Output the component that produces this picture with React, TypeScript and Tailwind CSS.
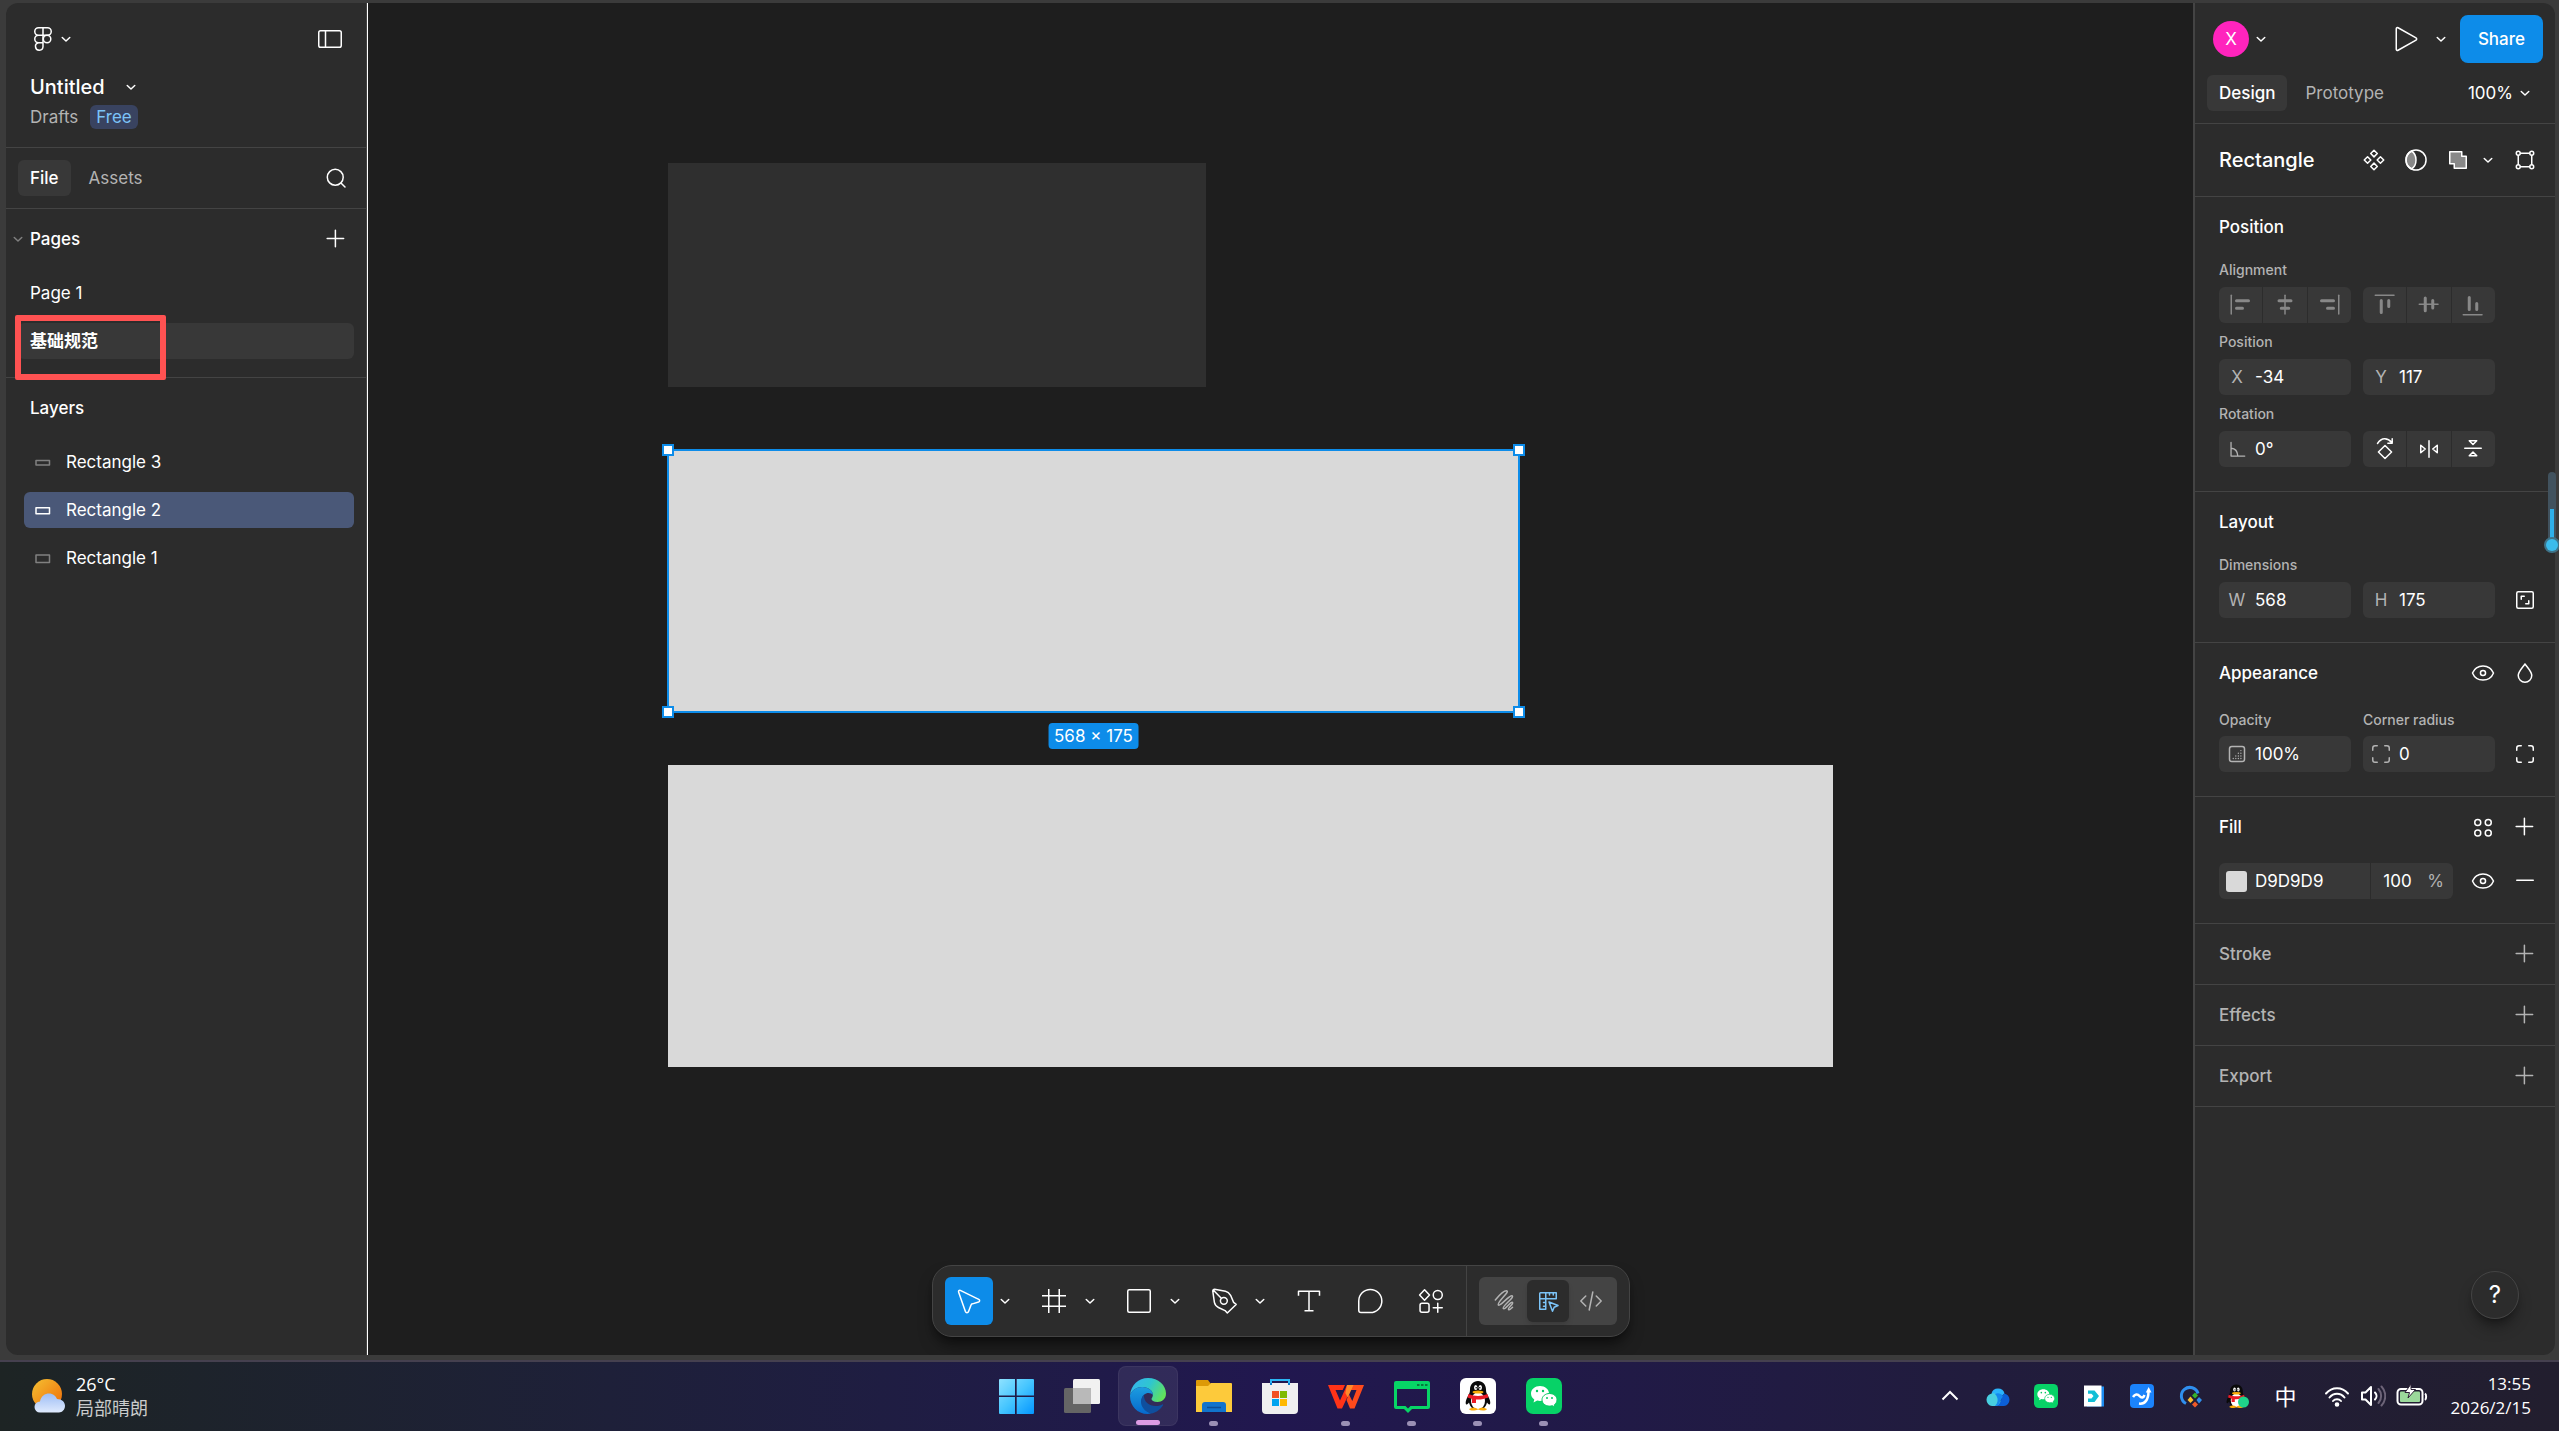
import React from "react";
import clsx from "clsx";

type IconProps = {
  className?: string;
  children: React.ReactNode;
};

// 24 unit grid, drawn at 36px
const Icon = ({ className, children }: IconProps) => (
  <svg
    viewBox="0 0 24 24"
    fill="none"
    stroke="currentColor"
    strokeLinecap="round"
    strokeLinejoin="round"
    aria-hidden="true"
    className={clsx("size-9 shrink-0", className)}>
    {children}
  </svg>
);

const Chevron = ({ className }: { className?: string }) => (
  <svg
    viewBox="0 0 16 16"
    fill="none"
    stroke="currentColor"
    strokeLinecap="round"
    strokeLinejoin="round"
    aria-hidden="true"
    className={clsx("size-6 shrink-0", className)}>
    <path d="M5.500 7 8 9.300 10.500 7" />
  </svg>
);

const PlusIcon = () => (
  <Icon>
    <path d="M11.600 6.100v11M6.100 11.600h11" />
  </Icon>
);

const EyeIcon = () => (
  <Icon>
    <path d="M5 12c1.300-3.200 4-4.700 7-4.700s5.700 1.500 7 4.700c-1.300 3.200-4 4.700-7 4.700S6.300 15.200 5 12z" />
    <circle cx="12" cy="12" r="1.700" />
  </Icon>
);

const CornersIcon = () => (
  <Icon>
    <path d="M6.500 9.500V8A1.500 1.500 0 0 1 8 6.500h1.500M14.500 6.500H16A1.500 1.500 0 0 1 17.500 8v1.500M17.500 14.500V16a1.500 1.500 0 0 1-1.500 1.500h-1.500M9.500 17.500H8A1.500 1.500 0 0 1 6.500 16v-1.500" />
  </Icon>
);

const IconButton = ({
  label,
  className,
  children,
}: IconProps & { label: string }) => (
  <button
    type="button"
    aria-label={label}
    className={clsx("flex items-center justify-center", className)}>
    {children}
  </button>
);

/* ---------- left panel ---------- */

const layers = [
  { name: "Rectangle 3", height: 3, selected: false },
  { name: "Rectangle 2", height: 4, selected: true },
  { name: "Rectangle 1", height: 5, selected: false },
];

const LeftPanel = () => (
  <aside className="w-[361px] shrink-0 rounded-l-xl border-r border-[#444444] bg-[#2c2c2c]">
    <header className="h-[145px] border-b border-[#444444] pt-[18px]">
      <div className="flex items-center pl-[19px] pr-[18px]">
        <IconButton label="Main menu">
          <Icon>
            <path d="M12 4.500H9a2.500 2.500 0 0 0 0 5h3zM12 4.500h3a2.500 2.500 0 0 1 0 5h-3zM12 9.500H9a2.500 2.500 0 0 0 0 5h3zM12 14.500H9a2.500 2.500 0 1 0 3 2.500z" />
            <circle cx="14.700" cy="12" r="2.500" />
          </Icon>
          <Chevron className="-ml-[7px]" />
        </IconButton>
        <IconButton label="Minimize UI" className="ml-auto">
          <Icon>
            <rect x="4.500" y="6.500" width="15" height="11" rx="1.200" />
            <path d="M9 6.500v11" />
          </Icon>
        </IconButton>
      </div>
      <div className="mt-4 flex h-7 items-center pl-6">
        <h1 className="text-[20px] font-[550]">Untitled</h1>
        <IconButton label="File options" className="ml-[14px]">
          <Chevron />
        </IconButton>
      </div>
      <div className="mt-1 flex items-center gap-3 pl-6">
        <a href="#drafts" className="text-[#b3b3b3]">
          Drafts
        </a>
        <span className="flex h-6 items-center rounded-md bg-[#394360] px-[6px] text-[#7cc4f8]">
          Free
        </span>
      </div>
    </header>

    <div className="flex h-[61px] items-center border-b border-[#444444] pl-3 pr-3">
      <button
        type="button"
        className="h-9 rounded-md bg-[#383838] px-3 font-[550]">
        File
      </button>
      <button type="button" className="ml-[6px] h-9 px-3 text-[#b3b3b3]">
        Assets
      </button>
      <IconButton label="Search" className="ml-auto">
        <Icon>
          <circle cx="11.500" cy="11.500" r="5.300" />
          <path d="m15.500 15.500 2.500 2.500" />
        </Icon>
      </IconButton>
    </div>

    <section className="border-b border-[#444444] pb-[18px]">
      <div className="flex h-[60px] items-center pr-3">
        <Chevron className="text-[#808080]" />
        <h2 className="font-[550]">Pages</h2>
        <IconButton label="Add page" className="ml-auto">
          <PlusIcon />
        </IconButton>
      </div>
      <ul className="mt-[6px] flex flex-col gap-3 pl-3 pr-3">
        <li className="flex h-9 items-center pl-3">Page 1</li>
        <li className="relative flex h-9 items-center rounded-md bg-[#383838] pl-3 font-bold">
          基础规范
          <span className="absolute -left-[3px] -top-2 h-[65px] w-[151px] rounded-xs border-6 border-[#ff5252]" />
        </li>
      </ul>
    </section>

    <section>
      <h2 className="flex h-[60px] items-center pl-6 font-[550]">Layers</h2>
      <ul className="mt-[6px] flex flex-col gap-3 pl-[18px] pr-3">
        {layers.map((layer) => (
          <li
            key={layer.name}
            className={clsx(
              "flex h-9 items-center rounded-md",
              layer.selected && "bg-[#4a5878]"
            )}>
            <Icon
              className={layer.selected ? "text-white" : "text-[#808080]"}>
              <rect
                x="8"
                y={12.5 - layer.height / 2}
                width="9"
                height={layer.height}
              />
            </Icon>
            <span className="ml-[6px]">{layer.name}</span>
          </li>
        ))}
      </ul>
    </section>
  </aside>
);

/* ---------- canvas ---------- */

const handles = [
  "-left-[6px] -top-[6px]",
  "-right-[6px] -top-[6px]",
  "-bottom-[6px] -left-[6px]",
  "-bottom-[6px] -right-[6px]",
];

const Canvas = () => (
  <main className="relative flex flex-1 items-end justify-center overflow-hidden border-l border-white bg-[#1e1e1e] pb-[18px]">
    <div className="absolute left-[300px] top-[160px] h-[224px] w-[538px] bg-[#2f2f2f]" />
    <div className="absolute left-[300px] top-[447px] h-[262px] w-[851px] bg-[#d9d9d9] outline-2 -outline-offset-1 outline-[#0d8ce9]">
      {handles.map((position) => (
        <span
          key={position}
          className={clsx(
            "absolute size-3 border-2 border-[#0d8ce9] bg-white",
            position
          )}
        />
      ))}
      <span className="absolute left-1/2 top-[273px] flex h-[26px] -translate-x-1/2 items-center whitespace-nowrap rounded-sm bg-[#0d8ce9] px-[6px]">
        568 × 175
      </span>
    </div>
    <div className="absolute left-[300px] top-[762px] h-[302px] w-[1165px] bg-[#d9d9d9]" />
    <Toolbar />
  </main>
);

const tools = [
  {
    name: "Move",
    active: true,
    menu: true,
    icon: (
      <path d="M5.100 6.100 9.600 19c.4 1 1.700 1 2.100 0l1.600-4.200c.2-.5.500-.8 1-.9l4.100-1.200c.9-.3.900-1.400.1-1.800L6.200 4.900c-.7-.3-1.400.4-1.100 1.200z" />
    ),
  },
  {
    name: "Frame",
    menu: true,
    icon: (
      <path
        d="M8.500 4.500v15M15.500 4.500v15M4.500 8.500h15M4.500 15.500h15"
        strokeLinecap="square"
      />
    ),
  },
  {
    name: "Rectangle",
    menu: true,
    icon: <rect x="4.500" y="4.500" width="15" height="15" rx="1" />,
  },
  {
    name: "Pen",
    menu: true,
    icon: (
      <>
        <path d="M4.500 5.200c.1-.6.500-1 1.200-1L13 5.500c1.500.3 2.600 1.300 3.400 2.700l2 4.700 1.700 1.400-5.900 5.700-1.500-1.600-4.400-2.100c-1.400-.7-2.400-1.900-2.700-3.400zM4.800 4.700l5.400 5.500" />
        <circle cx="11.900" cy="11.900" r="2.300" />
      </>
    ),
  },
  {
    name: "Text",
    icon: (
      <path
        d="M5 8V5.500h14V8M12 5.500v13M9.500 18.500h5"
        strokeLinecap="square"
      />
    ),
  },
  {
    name: "Comment",
    icon: (
      <path d="M4.500 12a7.700 7.700 0 1 1 7.700 7.700H6A1.500 1.500 0 0 1 4.500 18.200z" />
    ),
  },
  {
    name: "Actions",
    icon: (
      <>
        <path d="M7.700 4.500 11 8l-3.300 3.500L4.400 8zM16.500 13.500v6M13.500 16.500h6" />
        <circle cx="16.500" cy="8" r="3" />
        <rect x="4.700" y="13.500" width="6" height="6" rx="1.300" />
      </>
    ),
  },
];

const Toolbar = () => (
  <div className="z-10 flex h-[72px] items-center rounded-[20px] border border-[#444444] bg-[#2c2c2c] shadow-lg shadow-black/50">
    <div className="flex gap-[13px] pl-3 pr-[11px]">
      {tools.map((tool) => (
        <div key={tool.name} className="flex items-center">
          <IconButton
            label={tool.name}
            className={clsx("size-12 rounded-md", tool.active && "bg-[#0d8ce9]")}>
            <Icon>{tool.icon}</Icon>
          </IconButton>
          {tool.menu && (
            <IconButton label={`${tool.name} tools`}>
              <Chevron />
            </IconButton>
          )}
        </div>
      ))}
    </div>
    <div className="h-full border-l border-[#444444] px-3 py-[11px]">
      <div className="flex h-12 items-center rounded-md bg-[#444444] px-[3px] text-[#b3b3b3]">
        <IconButton label="Draw" className="h-[42px] w-[45px]">
          <Icon>
            <path d="M6.200 11.300C9 8 12.500 4.800 14 5.300 15.700 6.100 7 13 8.200 14.600 9.500 16 15.800 7.500 17.500 8.600 19 9.800 10.300 15.700 11.500 17c1.200 1.200 4.800-4.800 6.100-4.100 1.200.9-3.300 3.600-2.600 4.700.6.700 1.800-.6 2.700-1.400" />
          </Icon>
        </IconButton>
        <IconButton
          label="Design"
          className="size-[42px] rounded-md bg-[#2c2c2c] text-[#7cc4f8] shadow-md">
          <Icon>
            <path d="M7 6.500h10.500v4h-7v7h-4v-10.500a.5.500 0 0 1 .5-.5zM10.500 6.500v4h-4M13 6.500v1.500M15.500 6.500v1.500M9 13h1.500M9 15.500h1.500" />
            <path d="m12.700 12.700 6 2.300-2.600 1.200-1.100 2.600z" />
          </Icon>
        </IconButton>
        <IconButton label="Dev Mode" className="h-[42px] w-[45px]">
          <Icon>
            <path d="m8.500 8.700-3.300 3.300 3.300 3.300M15.500 8.700l3.300 3.300-3.300 3.300M13.200 6l-2.400 12" />
          </Icon>
        </IconButton>
      </div>
    </div>
  </div>
);

/* ---------- right panel ---------- */

const alignHorizontal = [
  {
    name: "Align left",
    line: "M5.500 5.500v12.500",
    bars: "M9 9.200h8M9 14.200h4",
  },
  {
    name: "Align horizontal centers",
    line: "M12 5.500v12.500",
    bars: "M8 9.200h8M9.500 14.200h5",
  },
  {
    name: "Align right",
    line: "M18.500 5.500v12.500",
    bars: "M7 9.200h8M11 14.200h4",
  },
];

const alignVertical = [
  { name: "Align top", line: "M5.500 5.500h12.500", bars: "M9.500 9v8M14.500 9v4" },
  {
    name: "Align vertical centers",
    line: "M5.500 11.500h12.500",
    bars: "M9.500 7.300v8.500M14.500 9v5",
  },
  {
    name: "Align bottom",
    line: "M5.500 18.500h12.500",
    bars: "M9.500 7v8M14.500 11v4",
  },
];

const transforms = [
  {
    name: "Rotate 90° right",
    icon: (
      <path d="M7 8.300c2.800-4 6.500-4 9.700-.5M16.800 5.200v2.900h-2.900M12 9.700l4.400 4.300-4.400 4.300L7.600 14z" />
    ),
  },
  {
    name: "Flip horizontal",
    icon: <path d="M12 6.500v11M6.500 9.500v5l3-2.500zM17.500 9.500v5l-3-2.500z" />,
  },
  {
    name: "Flip vertical",
    icon: <path d="M6.500 11.500h11M9.500 6.500h5L12 9zM9.500 16.500h5L12 14z" />,
  },
];

type CellsProps = {
  label: string;
  className?: string;
  items: { name: string; icon: React.ReactNode }[];
};

const Cells = ({ label, className, items }: CellsProps) => (
  <div
    role="group"
    aria-label={label}
    className={clsx("flex gap-px overflow-hidden rounded-md", className)}>
    {items.map((item) => (
      <IconButton
        key={item.name}
        label={item.name}
        className="flex-1 bg-[#383838]">
        <Icon>{item.icon}</Icon>
      </IconButton>
    ))}
  </div>
);

const toAlignCell = (item: (typeof alignHorizontal)[number]) => ({
  name: item.name,
  icon: (
    <>
      <path d={item.line} />
      <path d={item.bars} strokeWidth="2" />
    </>
  ),
});

type FieldProps = {
  name: string;
  value: string;
  children: React.ReactNode;
};

const Field = ({ name, value, children }: FieldProps) => (
  <label className="flex h-9 items-center rounded-md bg-[#383838]">
    <span className="flex w-9 shrink-0 justify-center text-[#b3b3b3]">
      {children}
    </span>
    <input
      aria-label={name}
      defaultValue={value}
      className="w-full min-w-0 outline-none"
    />
  </label>
);

const FieldLabel = ({ children }: { children: React.ReactNode }) => (
  <p className="text-sm font-medium text-[#b3b3b3]">{children}</p>
);

const Row = ({
  className,
  children,
}: {
  className?: string;
  children: React.ReactNode;
}) => (
  <div
    className={clsx(
      "grid grid-cols-[1fr_1fr_36px] items-center gap-x-3",
      className
    )}>
    {children}
  </div>
);

const Section = ({ children }: { children: React.ReactNode }) => (
  <section className="border-b border-[#444444] pb-6 pl-6 pr-3">
    {children}
  </section>
);

const RightPanel = () => (
  <aside className="flex w-[362px] shrink-0 flex-col rounded-r-xl border-l-2 border-[#444444] bg-[#2c2c2c]">
    <header className="border-b border-[#444444] pb-3 pt-3">
      <div className="flex h-12 items-center pl-[18px] pr-3">
        <IconButton label="Account">
          <span className="flex size-9 items-center justify-center rounded-full bg-[#ff24bd]">
            X
          </span>
          <Chevron />
        </IconButton>
        <IconButton label="Present" className="ml-auto">
          <Icon>
            <path d="M5.500 5.200v13.600a.8.800 0 0 0 1.200.7l12-6.800a.8.800 0 0 0 0-1.400l-12-6.800a.8.800 0 0 0-1.200.7z" />
          </Icon>
        </IconButton>
        <IconButton label="Present options" className="ml-[5px]">
          <Chevron />
        </IconButton>
        <button
          type="button"
          className="ml-[7px] h-12 rounded-lg bg-[#0d8ce9] px-[18px] font-medium">
          Share
        </button>
      </div>
      <div className="mt-3 flex h-9 items-center pl-3 pr-[18px]">
        <button
          type="button"
          className="h-9 rounded-md bg-[#383838] px-3 font-[550]">
          Design
        </button>
        <button type="button" className="ml-[6px] h-9 px-3 text-[#b3b3b3]">
          Prototype
        </button>
        <button type="button" className="ml-auto flex items-center">
          100%
          <Chevron />
        </button>
      </div>
    </header>

    <div className="flex h-[73px] items-center border-b border-[#444444] pl-6 pr-3">
      <h1 className="flex-1 text-[20px] font-[550]">Rectangle</h1>
      <IconButton label="Create component">
        <Icon>
          <path d="m12 5.500 2.200 2.200L12 9.900 9.800 7.700zM12 14.100l2.200 2.200-2.200 2.200-2.200-2.200zM7.700 9.800l2.200 2.200-2.200 2.200L5.500 12zM16.300 9.800l2.200 2.200-2.200 2.200-2.200-2.200z" />
        </Icon>
      </IconButton>
      <IconButton label="Use as mask" className="ml-[6px]">
        <Icon>
          <path
            d="M9 6a6.800 6.800 0 0 0 0 12c4-2.500 4-9.500 0-12z"
            fill="#888888"
          />
          <circle cx="12" cy="12" r="6.700" />
        </Icon>
      </IconButton>
      <IconButton label="Union" className="ml-[6px]">
        <Icon>
          <path
            d="M6.500 6.500h8v3h3v8h-8v-3h-3z"
            fill="#888888"
          />
        </Icon>
        <Chevron />
      </IconButton>
      <IconButton label="Edit object" className="ml-[7px]">
        <Icon>
          <path d="M9 7.500h6M9 16.500h6M7.500 9v6M16.500 9v6" />
          <circle cx="7.500" cy="7.500" r="1.300" />
          <circle cx="16.500" cy="7.500" r="1.300" />
          <circle cx="7.500" cy="16.500" r="1.300" />
          <circle cx="16.500" cy="16.500" r="1.300" />
        </Icon>
      </IconButton>
    </div>

    <Section>
      <h2 className="flex h-[54px] items-center pt-[6px] font-[550]">
        Position
      </h2>
      <Row className="auto-rows-[36px]">
        <div className="col-span-3 pt-[2px]">
          <FieldLabel>Alignment</FieldLabel>
        </div>
        <Cells
          label="Horizontal alignment"
          className="text-[#888888]"
          items={alignHorizontal.map(toAlignCell)}
        />
        <Cells
          label="Vertical alignment"
          className="text-[#888888]"
          items={alignVertical.map(toAlignCell)}
        />
        <div className="col-span-3 pt-[2px]">
          <FieldLabel>Position</FieldLabel>
        </div>
        <Field name="X position" value="-34">
          X
        </Field>
        <Field name="Y position" value="117">
          Y
        </Field>
        <div className="col-span-3 pt-[2px]">
          <FieldLabel>Rotation</FieldLabel>
        </div>
        <Field name="Rotation" value="0°">
          <Icon>
            <path d="M7.500 7v10.500H18M7.500 11.500c3 .2 5 2.500 5.200 6" transform="translate(1.500 1.500) scale(.87)" />
          </Icon>
        </Field>
        <Cells label="Transform" items={transforms} />
      </Row>
    </Section>

    <Section>
      <h2 className="flex h-[54px] items-center pt-[6px] font-[550]">
        Layout
      </h2>
      <Row className="auto-rows-[36px]">
        <div className="col-span-3 pt-[2px]">
          <FieldLabel>Dimensions</FieldLabel>
        </div>
        <Field name="Width" value="568">
          W
        </Field>
        <Field name="Height" value="175">
          H
        </Field>
        <IconButton label="Lock aspect ratio">
          <Icon>
            <rect x="6.500" y="6.500" width="11" height="11" rx="1" />
            <path d="M9.500 11.500v-2h2M14.500 12.500v2h-2" />
          </Icon>
        </IconButton>
      </Row>
    </Section>

    <Section>
      <div className="flex h-[60px] items-center gap-[6px]">
        <h2 className="flex-1 font-[550]">Appearance</h2>
        <IconButton label="Hide">
          <EyeIcon />
        </IconButton>
        <IconButton label="Blend mode">
          <Icon>
            <path d="M12 6c-1.500 2.300-4.500 5-4.500 7.700a4.500 4.500 0 0 0 9 0C16.500 11 13.500 8.300 12 6z" />
          </Icon>
        </IconButton>
      </div>
      <Row className="h-[33px]">
        <FieldLabel>Opacity</FieldLabel>
        <FieldLabel>Corner radius</FieldLabel>
      </Row>
      <Row>
        <Field name="Opacity" value="100%">
          <Icon>
            <rect x="7" y="7" width="10" height="10" rx="1.500" />
            <path
              d="M9.500 15h.01M11.200 15h.01M12.900 15h.01M14.600 15h.01M11.200 13.300h.01M12.900 13.300h.01M14.600 13.300h.01M12.900 11.500h.01M14.600 11.500h.01M14.600 9.700h.01"
              strokeWidth=".9"
            />
          </Icon>
        </Field>
        <Field name="Corner radius" value="0">
          <CornersIcon />
        </Field>
        <IconButton label="Individual corners">
          <CornersIcon />
        </IconButton>
      </Row>
    </Section>

    <Section>
      <div className="flex h-[60px] items-center gap-[6px]">
        <h2 className="flex-1 font-[550]">Fill</h2>
        <IconButton label="Styles">
          <Icon>
            <circle cx="8.500" cy="9" r="2" />
            <circle cx="15.500" cy="9" r="2" />
            <circle cx="8.500" cy="16" r="2" />
            <circle cx="15.500" cy="16" r="2" />
          </Icon>
        </IconButton>
        <IconButton label="Add fill">
          <PlusIcon />
        </IconButton>
      </div>
      <div className="mt-[6px] flex items-center">
        <div className="flex h-9 min-w-0 flex-1 items-center rounded-md bg-[#383838]">
          <span className="ml-[7px] size-[21px] shrink-0 rounded-[3px] bg-[#d9d9d9]" />
          <input
            aria-label="Fill color"
            defaultValue="D9D9D9"
            className="ml-2 w-full min-w-0 outline-none"
          />
          <label className="flex h-9 shrink-0 items-center border-l border-[#2c2c2c] pl-3 pr-[9px] text-[#b3b3b3]">
            <input
              aria-label="Fill opacity"
              defaultValue="100"
              className="w-11 text-white outline-none"
            />
            %
          </label>
        </div>
        <IconButton label="Hide fill" className="ml-3">
          <EyeIcon />
        </IconButton>
        <IconButton label="Remove fill" className="ml-[6px]">
          <Icon>
            <path d="M6.500 11.500h11" />
          </Icon>
        </IconButton>
      </div>
    </Section>

    {["Stroke", "Effects", "Export"].map((title) => (
      <section
        key={title}
        className="flex h-[61px] items-center justify-between border-b border-[#444444] pl-6 pr-3 text-[#b3b3b3]">
        <h2 className="font-[550]">{title}</h2>
        <IconButton label={`Add ${title}`}>
          <PlusIcon />
        </IconButton>
      </section>
    ))}

    <button
      type="button"
      aria-label="Help"
      className="mb-9 ml-auto mr-9 mt-auto size-12 rounded-full border border-[#444444] text-[24px] shadow-lg shadow-black/40">
      ?
    </button>
  </aside>
);

/* ---------- taskbar ---------- */

const StartLogo = () => (
  <svg viewBox="0 0 36 36" className="size-9">
    <defs>
      <linearGradient id="start" x1="0" y1="0" x2="1" y2="1">
        <stop offset="0" stopColor="#8fe2ff" />
        <stop offset=".5" stopColor="#45c5ff" />
        <stop offset="1" stopColor="#0496ff" />
      </linearGradient>
    </defs>
    <path
      d="M1 2a1 1 0 0 1 1-1h15v16.500H1zM18.700 1H35a1 1 0 0 1 1 1v15.500H18.700zM1 19h16v17H2a1 1 0 0 1-1-1zM18.700 19H36v16a1 1 0 0 1-1 1H18.700z"
      fill="url(#start)"
    />
  </svg>
);

const TaskViewLogo = () => (
  <svg viewBox="0 0 36 36" className="size-9">
    <rect y="10" width="27" height="25" rx="1.500" fill="#656565" />
    <rect x="9" y="1" width="27" height="25" rx="1.500" fill="#f1f1f1" />
    <path d="M9 10h18v16H9z" fill="#b9b9b9" />
  </svg>
);

const EdgeLogo = () => (
  <svg viewBox="0 0 36 36" className="size-9">
    <defs>
      <linearGradient id="edgeTop" x1="0" y1=".2" x2="1" y2=".6">
        <stop offset="0" stopColor="#35b4f0" />
        <stop offset=".5" stopColor="#2fc6cf" />
        <stop offset="1" stopColor="#62e25a" />
      </linearGradient>
      <linearGradient id="edgeLeft" x1="0" y1="0" x2="0" y2="1">
        <stop offset="0" stopColor="#1c9de0" />
        <stop offset="1" stopColor="#0669cd" />
      </linearGradient>
    </defs>
    <path
      d="M0 17C1 7 8.500 0 18 0c10.500 0 18 7.500 18 15.500C36 21 32 24 27.500 24c-4 0-6-1.500-6-3 0-1 1.400-1.700 1.400-4.200 0-4-4.500-7.800-10.400-7.800C6.500 9 2 12 0 17z"
      fill="url(#edgeTop)"
    />
    <path
      d="M0 17c2-5 6.500-8 12.400-8 5.900 0 10.500 3.800 10.500 7.800-1.500-2-6-3-8.900 0-5 5-2 15 7 18.700-1 .3-2 .5-3.500.5C7.500 36 0 28 0 18z"
      fill="url(#edgeLeft)"
    />
    <path
      d="M14 16.800c-6 5.500-2.500 16 7 18.700 5-.8 9.500-4 12-8.300.4-.8-.2-1-.8-.7-8 4-19 0-18.200-9.700z"
      fill="#0f4f9e"
    />
  </svg>
);

const ExplorerLogo = () => (
  <svg viewBox="0 0 36 36" className="size-9">
    <path d="M0 8V3a1 1 0 0 1 1-1h11l3 4v5H0z" fill="#dd9a07" />
    <path d="M0 8h12l3-3h20a1 1 0 0 1 1 1v28H0z" fill="#fdca3b" />
    <path d="M6 34V27a3 3 0 0 1 3-3h18a3 3 0 0 1 3 3v7z" fill="#1173cc" />
    <path d="M11 29.500h14" stroke="#0c4d96" strokeWidth="1.500" />
  </svg>
);

const StoreLogo = () => (
  <svg viewBox="0 0 36 36" className="size-9">
    <path d="M9 7V2h18v5" fill="none" stroke="#2bb6f4" strokeWidth="2" />
    <path d="M0 5h36v27a4 4 0 0 1-4 4H4a4 4 0 0 1-4-4z" fill="#efefef" />
    <path d="M9 7V5M27 7V5" stroke="#0a7fd0" strokeWidth="2" />
    <path d="M10 13h7v7h-7z" fill="#f25022" />
    <path d="M18 13h7v7h-7z" fill="#7fba00" />
    <path d="M10 21h7v7h-7z" fill="#00a4ef" />
    <path d="M18 21h7v7h-7z" fill="#ffb900" />
  </svg>
);

const WpsLogo = () => (
  <svg viewBox="0 0 36 36" className="size-9">
    <path
      d="M0 7h17l-2.300 5H7.500l4.500 10.500L19 7h6L14 30.500h-4.500z"
      fill="#ff3318"
    />
    <path
      d="M19 7h17L26.500 30.500H22L18.500 22l2.500-5.500 3.300 6.500 4.200-11h-6z"
      fill="#ff4a1c"
    />
    <path d="M19 7h6.500l-5.700 12.500-2.500-4.500z" fill="#ff8a2a" />
  </svg>
);

const ChatWindowLogo = () => (
  <svg viewBox="0 0 36 36" className="size-9">
    <path
      d="M2 3h32a2 2 0 0 1 2 2v24a2 2 0 0 1-2 2H18l-4 4-4-4H2a2 2 0 0 1-2-2V5a2 2 0 0 1 2-2zm1 8v17h8.500l2.500 2.500 2.500-2.500H33V11z"
      fill="#07d566"
      fillRule="evenodd"
    />
    <path d="M23 6h2.500v2H23zM27 6h2.500v2H27zM31 6h2.500v2H31z" fill="#067c3d" />
  </svg>
);

// Shared by the pinned app and the tray
const PenguinShape = () => (
  <>
    <path
      d="M18 3c5 0 8 3.700 8 8.500 0 2.500.5 4 2 6.500 2.300 4 3 8 1.500 8.500-.8.300-1.700-1-2.500-2-.5 2-1.500 4-3 5.500h-12c-1.500-1.500-2.500-3.500-3-5.500-.8 1-1.700 2.300-2.500 2C5 26 5.700 22 8 18c1.500-2.500 2-4 2-6.500C10 6.700 13 3 18 3z"
      fill="#0a0a0a"
    />
    <ellipse cx="18" cy="23" rx="7" ry="8.500" fill="#ffffff" />
    <path d="M9 31c3-2 6-2 9 0 3-2 6-2 9 0-1 2-6 2-9 .5-3 1.500-8 1.500-9-.5z" fill="#faab07" />
    <ellipse cx="15.700" cy="9.500" rx="1.700" ry="2.500" fill="#ffffff" />
    <ellipse cx="20.300" cy="9.500" rx="1.700" ry="2.500" fill="#ffffff" />
    <circle cx="16.200" cy="9.800" r=".8" fill="#0a0a0a" />
    <circle cx="19.800" cy="9.800" r=".8" fill="#0a0a0a" />
    <ellipse cx="18" cy="14" rx="5.500" ry="1.600" fill="#faab07" />
    <path
      d="M8.500 16c6 2.500 13 2.500 19 0l1 3.500c-4 1.500-8 2.300-12.500 2V25h-4v-4.200c-1.600-.3-3-.8-4.500-1.300z"
      fill="#eb1c26"
    />
  </>
);

const QQLogo = () => (
  <svg viewBox="0 0 36 36" className="size-9">
    <rect width="36" height="36" rx="6" fill="#ffffff" />
    <PenguinShape />
  </svg>
);

const WeChatLogo = ({ className }: { className: string }) => (
  <svg viewBox="0 0 36 36" className={className}>
    <rect width="36" height="36" rx="7" fill="#07d267" />
    <path
      d="M14 8c5 0 9 3.300 9 7.500S19 23 14 23c-1 0-2-.1-2.800-.4L7.500 24.500l.8-3C6.200 20 5 18 5 15.500 5 11.300 9 8 14 8z"
      fill="#ffffff"
    />
    <path
      d="M23.500 15.500c4.200 0 7.500 2.800 7.500 6.300 0 2-1 3.700-2.600 4.900l.6 2.300-2.700-1.300c-.9.300-1.800.4-2.800.4-4.200 0-7.500-2.800-7.500-6.300s3.300-6.300 7.500-6.300z"
      fill="#ffffff"
      stroke="#07c962"
    />
    <circle cx="11" cy="13" r="1.200" fill="#07c962" />
    <circle cx="17" cy="13" r="1.200" fill="#07c962" />
    <circle cx="21" cy="20" r="1" fill="#07c962" />
    <circle cx="26" cy="20" r="1" fill="#07c962" />
  </svg>
);

const apps = [
  { name: "Start", logo: <StartLogo /> },
  { name: "Task View", logo: <TaskViewLogo /> },
  { name: "Edge", logo: <EdgeLogo />, active: true },
  { name: "File Explorer", logo: <ExplorerLogo />, running: true },
  { name: "Store", logo: <StoreLogo /> },
  { name: "WPS", logo: <WpsLogo />, running: true },
  { name: "Chat", logo: <ChatWindowLogo />, running: true },
  { name: "QQ", logo: <QQLogo />, running: true },
  { name: "WeChat", logo: <WeChatLogo className="size-9" />, running: true },
];

const tray = [
  {
    name: "Show hidden icons",
    icon: (
      <path
        d="m4.500 15.500 7.500-7.500 7.500 7.500"
        fill="none"
        stroke="#ffffff"
        strokeWidth="2"
      />
    ),
  },
  {
    name: "OneDrive",
    icon: (
      <>
        <path d="M5.500 9.500a6.700 6.700 0 0 1 13 0L12 15z" fill="#2ab4fb" />
        <path
          d="M6 9.500c2.500-.5 4.500.5 6 2.500l5 10H6a6.300 6.300 0 0 1 0-12.500z"
          fill="#48cfe0"
        />
        <path
          d="M18 9.500a6.300 6.300 0 0 1 0 12.500H9.500c4-1 5-4 6-7 .7-2.500 1-4 2.500-5.500z"
          fill="#0c5fd6"
        />
        <path d="M9 10c3-1.500 6-.5 8 2l-4 8c-1 1.500-2.500 2-4 2 3-3 4-8 0-12z" fill="#1488ee" />
      </>
    ),
  },
  { name: "WeChat", icon: <WeChatLogo className="size-6" /> },
  {
    name: "Docs",
    icon: (
      <>
        <path d="M5 2.500h17v20H5z" fill="#1c8cf0" />
        <path d="M2 1.500h17.500v21H2z" fill="#ffffff" />
        <path
          d="M6 6.500h6.500L17 12l-4.500 6H6v-3.500h3.500l2-2.500-2-2.200H6z"
          fill="#12bfd6"
        />
      </>
    ),
  },
  {
    name: "Sync",
    icon: (
      <>
        <rect width="24" height="24" rx="4" fill="#1b83fb" />
        <path
          d="M3 13c2-3 4.500-3.500 6.500-1s4 2 5-1M9 19.500c6 1 9.500-4 9.500-12"
          fill="none"
          stroke="#ffffff"
          strokeWidth="2.500"
        />
        <path d="m18.700 3 2.800 5.500h-5.700z" fill="#ffffff" />
      </>
    ),
  },
  {
    name: "Browser",
    icon: (
      <>
        <path
          d="M8 19.500A8.500 8.500 0 1 1 20 9.500"
          fill="none"
          stroke="#2f8fee"
          strokeWidth="3"
        />
        <path d="m17 8.500 3 3-3 3-3-3z" fill="#36b32c" />
        <path d="m21 13 3 3-3 3.500-2.500-3.500z" fill="#2f8fee" />
        <path d="m17 17.500 3 3-3 3-3-3z" fill="#f05a28" />
        <path d="m12.500 12.500 3 3.500-3 3-3-3z" fill="#fbc02d" />
      </>
    ),
  },
  {
    name: "QQ",
    icon: (
      <>
        <g transform="translate(-4 -2) scale(.8)">
          <PenguinShape />
        </g>
        <circle cx="17.500" cy="18" r="5.500" fill="#1fd38a" />
      </>
    ),
  },
];

const Taskbar = () => (
  <footer className="grid h-[71px] grid-cols-[1fr_auto_1fr] items-center border-t-2 border-[#45404f] bg-linear-to-r from-[#1d2424] via-[#21174f] to-[#221e2e] pb-[2px] font-['Open_Sans','Noto_Sans_CJK_SC',sans-serif]">
    <div className="flex items-center gap-[10px] pl-8">
      <svg viewBox="0 0 34 34" className="size-[34px]">
        <defs>
          <linearGradient id="sun" x1="0" y1="0" x2="1" y2="1">
            <stop offset="0" stopColor="#f5c132" />
            <stop offset="1" stopColor="#ef6a08" />
          </linearGradient>
          <linearGradient id="cloud" x1="0" y1="0" x2="0" y2="1">
            <stop offset="0" stopColor="#9dbdf5" />
            <stop offset="1" stopColor="#dfeafd" />
          </linearGradient>
        </defs>
        <circle cx="15" cy="15" r="15" fill="url(#sun)" />
        <path
          d="M8 33.500a5.500 5.500 0 0 1 0-11c1-5.500 5-8 9-8s7 2.500 8 5.500c5 0 8 3 8 6.800 0 4-3 6.700-6 6.700z"
          fill="url(#cloud)"
        />
      </svg>
      <div className="text-[18px]/6">
        <p>26°C</p>
        <p className="text-[#c9cbcb]">局部晴朗</p>
      </div>
    </div>

    <nav className="flex gap-[6px]">
      {apps.map((app) => (
        <button
          key={app.name}
          type="button"
          aria-label={app.name}
          className={clsx(
            "relative flex size-[60px] items-center justify-center rounded-lg",
            app.active && "border border-white/5 bg-white/8"
          )}>
          {app.logo}
          {app.active && (
            <span className="absolute bottom-0 h-[5px] w-6 rounded-full bg-[#dc9be4]" />
          )}
          {app.running && (
            <span className="absolute bottom-0 h-[5px] w-[9px] rounded-full bg-[#9b90b5]" />
          )}
        </button>
      ))}
    </nav>

    <div className="flex items-center justify-end gap-6 pr-7">
      {tray.map((item) => (
        <button key={item.name} type="button" aria-label={item.name}>
          <svg viewBox="0 0 24 24" className="size-6">
            {item.icon}
          </svg>
        </button>
      ))}
      <button type="button" className="text-[22px]">
        中
      </button>
      <div className="flex items-center gap-[10px] pl-1">
        <svg
          viewBox="0 0 26 24"
          fill="none"
          stroke="#ffffff"
          strokeWidth="2"
          strokeLinecap="round"
          className="h-6 w-[26px]">
          <path d="M2 9.500c6-7 16-7 22 0M5.500 13.500c4-5 11-5 15 0M9 17c2-2.500 6-2.500 8 0" />
          <circle cx="13" cy="20.500" r="1.300" fill="#ffffff" />
        </svg>
        <svg
          viewBox="0 0 26 24"
          fill="none"
          stroke="#ffffff"
          strokeWidth="2"
          strokeLinecap="round"
          strokeLinejoin="round"
          className="h-6 w-[26px]">
          <path d="M2 8.500h3.500L11 3v18l-5.500-5.500H2zM15 8.500c2 2 2 5 0 7" />
          <path d="M18.500 5c3.500 4 3.500 10 0 14M21.500 2.500c5 5.500 5 13.500 0 19" stroke="#6d6478" />
        </svg>
        <svg viewBox="0 0 32 24" className="h-6 w-8">
          <rect
            x="1.500"
            y="5"
            width="25"
            height="15.500"
            rx="3.500"
            fill="none"
            stroke="#ffffff"
            strokeWidth="2"
          />
          <rect x="4" y="7.500" width="20" height="10.500" rx="1" fill="#9bd99b" />
          <path d="M29 9.500c1.500 1 1.500 5.500 0 6.500" fill="none" stroke="#ffffff" strokeWidth="2" />
          <path d="M15 0 9 8.500h4.500L12 14l7.500-8.500H15z" fill="#ffffff" stroke="#2b2035" />
        </svg>
      </div>
      <div className="-ml-[2px] text-right text-[17px]/6">
        <p>13:55</p>
        <p>2026/2/15</p>
      </div>
    </div>
  </footer>
);

const App = () => {
  return (
    <div className="flex min-h-screen flex-col bg-[#3b3b3b] font-['Inter','Noto_Sans_CJK_SC',sans-serif] text-[17px]/6 text-white">
      <div className="relative flex flex-1 pb-[5px] pl-[6px] pr-1 pt-[3px]">
        <LeftPanel />
        <Canvas />
        <RightPanel />
        {/* floating volume indicator on the window edge */}
        <div className="absolute right-[3px] top-[472px] flex h-[77px] w-2 justify-center rounded-t-full bg-[#41525e]">
          <span className="absolute bottom-0 h-10 w-1 bg-[#2fb0ea]" />
          <span className="absolute -bottom-[2px] size-3 rounded-full bg-[#3bbcec] ring-2 ring-[#3f7388]" />
        </div>
      </div>
      <Taskbar />
    </div>
  );
};

export default App;
